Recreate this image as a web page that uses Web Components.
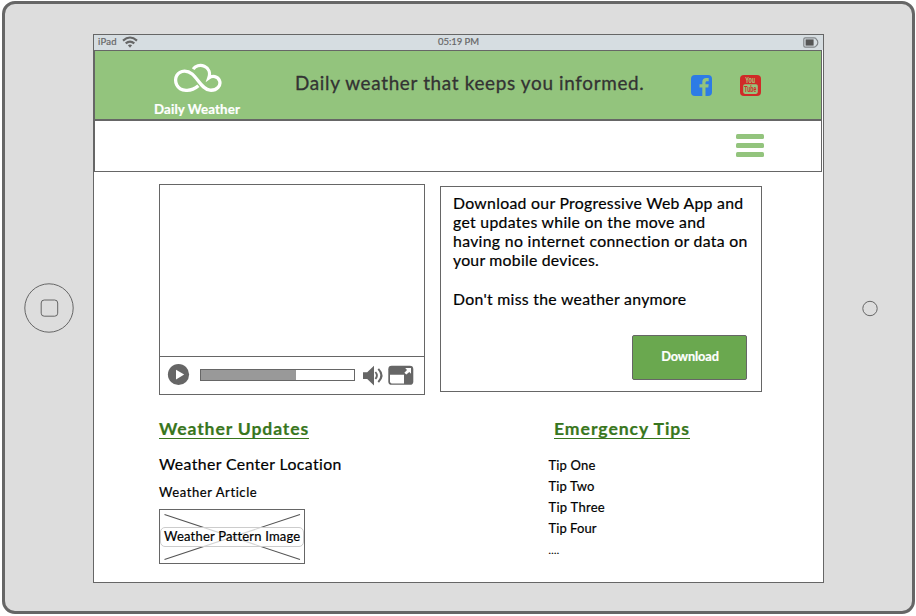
<!DOCTYPE html>
<html lang="en">
<head>
<meta charset="utf-8">
<title>Daily Weather</title>
<style>
html,body{margin:0;background:#fff}
body{width:916px;height:616px;overflow:hidden;font-family:Lato,"Liberation Sans",sans-serif;color:#000}
</style>
</head>
<body>
<tablet-frame>
  <status-bar></status-bar>
  <site-header></site-header>
  <nav-strip></nav-strip>
  <weather-home></weather-home>
</tablet-frame>
<script>
function define(name, html, after){
  const t=document.createElement('template');
  t.innerHTML=html;
  customElements.define(name, class extends HTMLElement{
    connectedCallback(){
      if(this.shadowRoot) return;
      this.attachShadow({mode:'open'}).appendChild(t.content.cloneNode(true));
      if(after) after(this);
    }
  });
}

/* One line of text, tracked so that it fills the width in its "w" attribute. */
define('text-line', `<style>
:host{display:block;white-space:nowrap;line-height:20px;-webkit-text-stroke:.2px currentColor}
span{display:inline-block}
</style><span><slot></slot></span>`, el=>{
  const size=el.getAttribute('size'), w=+el.getAttribute('w');
  if(size) el.style.fontSize=size+'px';
  const s=el.shadowRoot.querySelector('span');
  const n=el.textContent.length;
  const d=(w-s.getBoundingClientRect().width)/n;
  s.style.letterSpacing=d+'px';
});

define('tablet-frame', `<style>
:host{display:grid;grid-template-columns:88px 731px 1fr;align-items:center;box-sizing:border-box;width:913px;height:613px;margin:1px 0 0 2px;border:3px solid #666;border-radius:13px;background:#ddd}
.home{display:block;margin-left:19px}
.cam{display:block;margin-left:37px;margin-top:1px}
.screen{box-sizing:border-box;height:549px;border:1px solid #666;background:#fff;margin-top:1px}
svg{fill:none;stroke:#666}
</style>
<svg class="home" width="50" height="50"><circle cx="25" cy="25" r="24.2"/><rect x="17.2" y="17" width="16.5" height="16.2" rx="3"/></svg>
<div class="screen"><slot></slot></div>
<svg class="cam" width="17" height="17"><circle cx="9" cy="8.5" r="7.2"/></svg>`);

define('status-bar', `<style>
:host{display:grid;grid-template-columns:1fr auto 1fr;height:15px;background:#d6dde1;color:#666;align-items:center}
.l{display:flex;align-items:center;gap:5px;padding-left:4px}
.r{justify-self:end;padding-right:4px}
text-line{line-height:14px}
svg{display:block}
</style>
<div class="l"><text-line size="9.5" w="19">iPad</text-line>
<svg width="16" height="12" viewBox="0 0 16 12" fill="none" stroke="#666" stroke-width="2.1"><path d="M1 4.6Q8 -1.6 15 4.6M3.7 7.4Q8 3.7 12.3 7.4"/><path d="M5.9 9.3Q8 7.7 10.1 9.3L8 11.7Z" fill="#666" stroke="none"/></svg></div>
<text-line size="9.5" w="41">05:19 PM</text-line>
<svg class="r" width="16" height="11" viewBox="0 0 16 11"><path d="M2.2.9H11.2Q13 .9 13.5 2.6Q14.8 3 14.8 5.5T13.5 8.4Q13 10.1 11.2 10.1H2.2Q.8 10.1.8 8.7V2.3Q.8.9 2.2.9Z" fill="none" stroke="#808487" stroke-width="1.2"/><path d="M2.6 2.4H10.6V8.6H2.6Z" fill="#555"/></svg>`);

define('brand-mark', `<style>
:host{display:flex;flex-direction:column;align-items:center;color:#fff;font-weight:700}
svg{display:block;margin-left:2px}
text-line{margin-top:5px}
</style>
<svg width="50" height="32" viewBox="0 0 50 32" fill="none" stroke="#fff" stroke-width="3.4"><path d="M25.4 23.6C17.5 30.5 6.5 29.5 3 22.4C-.2 15.4 4 8.6 11 8.3C23 8 26.5 27.2 37.4 28.1C44.8 28.6 49 22.8 47.2 18.2C45.5 13.3 39.6 12.8 36.2 15.3C38 10 36 5.3 31.5 3.3C27 1.4 22.2 3 20 6.3" stroke-linejoin="miter"/></svg>
<text-line size="13.3" w="86">Daily Weather</text-line>`);

define('social-links', `<style>
:host{display:flex;gap:28px}
svg{display:block;overflow:visible}
text{font-family:"Liberation Sans Narrow","Liberation Sans",sans-serif;font-weight:700}
</style>
<svg width="21" height="21" viewBox="0 0 21 21"><rect width="21" height="21" rx="4" fill="#2d7be5"/><path d="M11.3 21V12.5H8.5V9.3H11.3V7.1C11.3 4.5 12.8 3.1 15.2 3.1H17.7V6.2H16.1C14.9 6.2 14.5 6.8 14.5 7.8V9.3H17.7L17.3 12.5H14.5V21Z" fill="#93c47d"/></svg>
<svg width="21" height="21" viewBox="0 0 21 21"><rect width="21" height="21" rx="4" fill="#d02a27"/><rect x="3.2" y="9.3" width="14.6" height="9.6" rx="1.8" fill="#93c47d"/><text transform="translate(5.3 8) scale(.62 1)" font-size="8.8" fill="#a9c77f">You</text><text transform="translate(4.3 17.3) scale(.6 1)" font-size="8.8" fill="#d02a27">Tube</text></svg>`);

define('site-header', `<style>
:host{display:flex;box-sizing:border-box;width:728px;height:70px;border:1px solid #666;background:#93c47d;color:#333}
brand-mark{margin:12px 0 0 59px}
.tag{margin:22px 0 0 55px;-webkit-text-stroke-width:.3px}
social-links{margin:24px 0 0 46px}
</style>
<brand-mark></brand-mark><text-line class="tag" size="18.9" w="349.5">Daily weather that keeps you informed.</text-line><social-links></social-links>`);

define('nav-strip', `<style>
:host{display:flex;justify-content:flex-end;box-sizing:border-box;width:728px;height:52px;border:1px solid #666;padding:13px 57px 0 0}
.menu{display:flex;flex-direction:column;gap:4px;width:28px}
i{height:5px;border-radius:1.5px;background:#93c47d}
</style><div class="menu"><i></i><i></i><i></i></div>`);

define('video-player', `<style>
:host{display:flex;flex-direction:column;box-sizing:border-box;width:266px;height:211px;border:1px solid #666}
.view{flex:1}
.bar{display:flex;align-items:center;height:37px;border-top:1px solid #666;padding-left:8px;box-sizing:content-box}
.track{box-sizing:border-box;width:155px;height:12px;border:1px solid #666;margin:0 8px 0 10px}
.track b{display:block;width:95px;height:10px;background:#999}
svg{display:block;overflow:visible}
</style>
<div class="view"></div>
<div class="bar">
<svg width="22" height="22" viewBox="0 0 22 22"><circle cx="10.5" cy="10.5" r="10.6" fill="#666"/><path d="M8 5.8V15.4L16.2 10.6Z" fill="#fff"/></svg>
<div class="track"><b></b></div>
<svg width="20" height="21" viewBox="0 0 20 21" fill="none" stroke="#666"><path d="M0 7.2H4.2L11 .8V20.6L4.2 14H0Z" fill="#666" stroke="none"/><path d="M12.4 7Q15.4 10.5 12.4 14" stroke-width="1.8"/><path d="M15.3 3.9Q21.7 10.5 15.3 17.1" stroke-width="2"/></svg>
<svg width="26" height="20" viewBox="0 0 26 20" style="margin-left:5px"><rect x=".3" y=".8" width="25" height="19" rx="3.4" fill="#666"/><path d="M2 9.8H16V18.4H3.6Q2 18.4 2 16.6Z" fill="#fff"/><path d="M17.2 2.9H23V8.7L21.3 6.9L18.3 9.6L16.4 7.8L19 4.9Z" fill="#fff"/></svg>
</div>`);

define('action-button', `<style>
:host{display:grid;place-items:center;box-sizing:border-box;width:115px;height:45px;border:1px solid #666;border-radius:2px;background:#6aa84f;color:#fff;font-weight:700;padding-left:1px}
</style><slot></slot>`);

define('download-card', `<style>
:host{display:flex;flex-direction:column;box-sizing:border-box;width:322px;height:206px;border:1px solid #666;padding:6px 14px 11px 12px}
text-line{line-height:19.2px}
.gap{margin-top:19.2px}
action-button{margin:auto 0 0 auto}
</style>
<text-line size="15.8" w="290.5">Download our Progressive Web App and</text-line>
<text-line size="15.8" w="252.5">get updates while on the move and</text-line>
<text-line size="15.8" w="295">having no internet connection or data on</text-line>
<text-line size="15.8" w="146">your mobile devices.</text-line>
<text-line class="gap" size="15.8" w="233.5">Don't miss the weather anymore</text-line>
<action-button><text-line size="12.8" w="57.5">Download</text-line></action-button>`);

define('section-title', `<style>
:host{display:block;width:max-content;height:19px;border-bottom:1px solid #38761d;color:#38761d;font-weight:700}
</style><slot></slot>`);

define('image-box', `<style>
:host{display:grid;box-sizing:border-box;width:146px;height:55px;border:1px solid #666;align-items:center;justify-items:center}
svg,.label{grid-area:1/1}
.label{box-sizing:border-box;width:144px;height:20px;border:1px solid #ccc;border-radius:5px;background:rgba(255,255,255,.75);padding-left:3px;margin-top:1px}
text-line{line-height:17px}
</style>
<svg width="144" height="53" stroke="#555" stroke-width="1.1"><path d="M4.5 4.5L140 49.5M140 4.5L4.5 49.5"/></svg>
<div class="label"><text-line size="13" w="136">Weather Pattern Image</text-line></div>`);

define('weather-home', `<style>
:host{display:block;padding:12px 0 0 65px}
.top{display:flex;gap:15px}
download-card{margin-top:2px}
.bottom{display:grid;grid-template-columns:389px 1fr;margin-top:24px}
.loc{margin-top:15px}.art{margin-top:8px}
image-box{margin-top:7px}
.right section-title{margin-left:6px}
.tips{margin:16px 0 0 .5px}
.tips text-line{line-height:21px}
.tips .more{line-height:23px}
</style>
<div class="top"><video-player></video-player><download-card></download-card></div>
<div class="bottom">
<div><section-title><text-line size="17.6" w="150">Weather Updates</text-line></section-title>
<text-line class="loc" size="15.8" w="183">Weather Center Location</text-line>
<text-line class="art" size="13" w="98.5">Weather Article</text-line>
<image-box></image-box></div>
<div class="right"><section-title><text-line size="17.6" w="136">Emergency Tips</text-line></section-title>
<div class="tips"><text-line size="13" w="47">Tip One</text-line><text-line size="13" w="46">Tip Two</text-line><text-line size="13" w="56.5">Tip Three</text-line><text-line size="13" w="48">Tip Four</text-line><text-line class="more" size="10" w="11">....</text-line></div></div>
</div>`);
</script>
</body>
</html>
